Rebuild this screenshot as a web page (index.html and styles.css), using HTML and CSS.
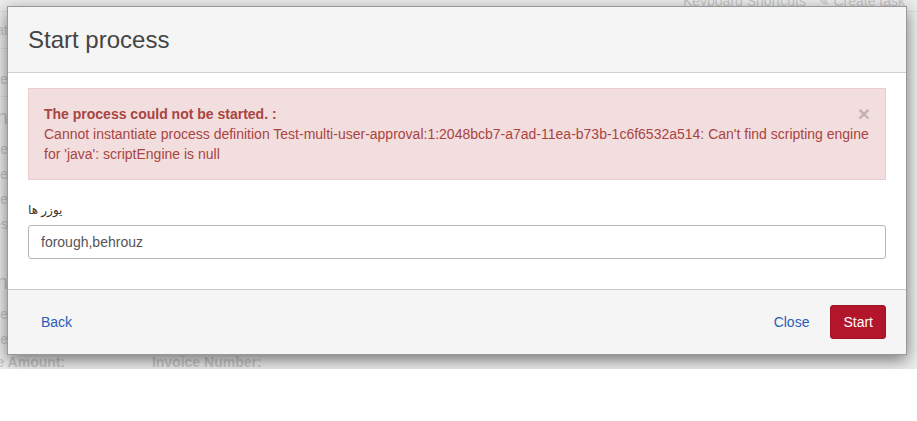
FILE: index.html
```html
<!DOCTYPE html>
<html lang="en">

<head>
    <meta charset="UTF-8">
    <meta name="viewport" content="width=device-width, initial-scale=1.0">
    <title>Start process</title>
    <link rel="stylesheet" href="styles.css">
</head>

<body>

    <div class="page">
        <!-- page behind the dialog, dimmed by the backdrop -->
        <div class="topbar">
            <div class="topbar-links">
                <span>Keyboard Shortcuts</span>
                <span class="create">&#9998; Create task</span>
            </div>
        </div>

        <div class="side">
            <div class="side-row side-line">Format</div>
            <div class="side-row side-line tall">Date</div>
            <div class="side-head">Design</div>
            <div class="side-row">Name</div>
            <div class="side-row">Type</div>
            <div class="side-row">Price</div>
            <div class="side-row">Notes</div>
            <div class="side-head gap">Design</div>
            <div class="side-row">Name</div>
            <div class="side-row">Date</div>
        </div>

        <div class="invoice-row">
            <span class="invoice-amount">Invoice Amount:</span>
            <span class="invoice-number">Invoice Number:</span>
        </div>

        <div class="modal">
            <div class="modal-header">
                <h4 class="modal-title">Start process</h4>
            </div>

            <div class="modal-body">
                <div class="alert">
                    <button type="button" class="close">&times;</button>
                    <strong>The process could not be started. :</strong><br>
                    Cannot instantiate process definition Test-multi-user-approval:1:2048bcb7-a7ad-11ea-b73b-1c6f6532a514: Can't find scripting engine for 'java': scriptEngine is null
                </div>

                <div class="form-group">
                    <label for="users">یوزر ها</label>
                    <input type="text" id="users" name="users" value="forough,behrouz">
                </div>
            </div>

            <div class="modal-footer">
                <button type="button" class="btn btn-link">Back</button>
                <div class="footer-right">
                    <button type="button" class="btn btn-link">Close</button>
                    <button type="button" class="btn btn-start">Start</button>
                </div>
            </div>
        </div>
    </div>

</body>

</html>
```

FILE: styles.css
```css
body {
    font-family: 'Liberation Sans', 'DejaVu Sans', Arial, sans-serif;
    font-size: 14px;
    line-height: 20px;
    color: #333;
    background-color: #fff;
    margin: 0;
    padding: 0;
}

.page {
    position: relative;
    height: 369px;
    overflow: hidden;
    background-color: #ededed;
    color: #c6c6c6;
}

.topbar {
    height: 20px;
    border-bottom: 1px solid #dedede;
    text-align: right;
    padding-right: 12px;
    font-size: 14px;
}

.topbar-links {
    margin-top: -9px;
    line-height: 20px;
}

.topbar-links .create {
    margin-left: 8px;
}

.side {
    width: 120px;
    margin-left: -112px;
    text-align: right;
}

.side-row {
    height: 25px;
    line-height: 25px;
}

.side-line {
    height: 36px;
    line-height: 36px;
    border-bottom: 1px solid #dedede;
}

.side-line.tall {
    height: 47px;
    line-height: 60px;
}

.side-head {
    font-size: 20px;
    height: 40px;
    line-height: 40px;
}

.side-head.gap {
    margin-top: 25px;
}

.invoice-row {
    position: absolute;
    left: 0;
    top: 352px;
    font-weight: bold;
    color: #c8c8c8;
}

.invoice-amount {
    display: inline-block;
    width: 192px;
    margin-left: -44px;
}

.modal {
    position: absolute;
    top: 6px;
    left: 7px;
    width: 900px;
    box-sizing: border-box;
    background-color: #fff;
    border: 1px solid rgba(0, 0, 0, 0.4);
    box-shadow: 0 5px 15px rgba(0, 0, 0, 0.5);
    color: #333;
}

.modal-header {
    background-color: #f5f5f5;
    padding: 15px 20px;
    border-bottom: 1px solid #cfcfcf;
}

.modal-title {
    margin: 0;
    font-size: 24px;
    font-weight: normal;
    line-height: 35px;
    color: #444;
}

.modal-body {
    padding: 15px 20px;
}

.alert {
    background-color: #f2dede;
    border: 1px solid #ebccd1;
    color: #a94442;
    padding: 15px 12px 15px 15px;
    margin-bottom: 20px;
}

.close {
    float: right;
    position: relative;
    top: 1px;
    right: 3px;
    height: 18px;
    padding: 0;
    border: none;
    background: transparent;
    font-family: 'Liberation Sans', Arial, sans-serif;
    font-size: 21px;
    font-weight: bold;
    line-height: 18px;
    color: #000;
    opacity: 0.2;
    cursor: pointer;
}

.form-group {
    margin-bottom: 15px;
}

label {
    display: block;
    margin-bottom: 5px;
    font-size: 12px;
    font-weight: normal;
    color: #333;
}

input {
    display: block;
    width: 100%;
    height: 34px;
    padding: 6px 12px;
    box-sizing: border-box;
    border: 1px solid #b5b5b5;
    border-radius: 3px;
    font-family: 'Liberation Sans', Arial, sans-serif;
    font-size: 14px;
    color: #555;
}

.modal-footer {
    display: flex;
    justify-content: space-between;
    align-items: center;
    background-color: #f5f5f5;
    padding: 15px 20px;
    border-top: 1px solid #c9c9c9;
}

.footer-right {
    display: flex;
    gap: 8px;
}

.btn {
    height: 34px;
    padding: 6px 12px;
    border: 1px solid transparent;
    border-radius: 3px;
    font-family: 'Liberation Sans', Arial, sans-serif;
    font-size: 14px;
    line-height: 20px;
    cursor: pointer;
}

.btn-link {
    background: transparent;
    color: #2b5cb8;
}

.btn-start {
    background-color: #b3152b;
    border-color: #a11226;
    color: #fff;
}

.btn-start:hover {
    background-color: #9c1124;
}
```
